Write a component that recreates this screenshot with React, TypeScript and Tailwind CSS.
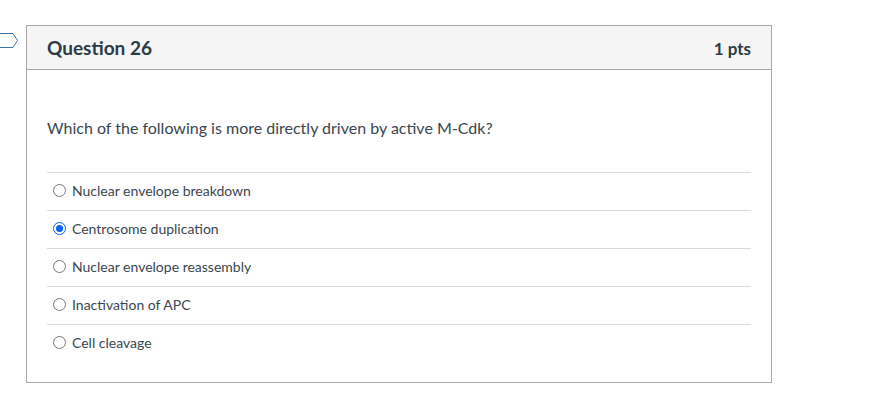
const answers = [
  'Nuclear envelope breakdown',
  'Centrosome duplication',
  'Nuclear envelope reassembly',
  'Inactivation of APC',
  'Cell cleavage',
];

function Radio({ checked }: { checked: boolean }) {
  return (
    <span
      className={`flex h-[13px] w-[13px] shrink-0 items-center justify-center rounded-full border ${
        checked ? 'border-[#0b62f5]' : 'border-[#767676]'
      } bg-white`}
    >
      {checked && <span className="h-[7px] w-[7px] rounded-full bg-[#0b62f5]" />}
    </span>
  );
}

export default function App() {
  return (
    <div className="relative h-[417px] w-[891px] bg-white pt-[25px] font-['Lato','Noto_Sans',sans-serif] text-[#3a4650]">
      {/* bookmark flag */}
      <svg className="absolute left-0 top-[33px]" width="19" height="15" viewBox="0 0 19 15">
        <path d="M-1 0.5 H13 L17.5 7.5 L13 14.5 H-1" fill="white" stroke="#3b73af" strokeWidth="1" />
      </svg>
      <div className="ml-[26px] w-[746px] border border-[#a8a8a8]">
        <div className="flex h-[44px] items-center justify-between border-b border-[#a8a8a8] bg-[#f5f5f5] pl-[20px] pr-[20px] text-[#2d3b45]">
          <span className="pt-[2px] text-[19px] font-bold">Question 26</span>
          <span className="pt-[2px] text-[17px] font-bold">1 pts</span>
        </div>
        <div className="px-[20px] pb-[20px]">
          <p className="pb-[34px] pt-[47px] text-[16px] leading-[21px]">
            Which of the following is more directly driven by active M-Cdk?
          </p>
          <div>
            {answers.map((a, i) => (
              <div key={a} className="flex h-[38px] items-center gap-[6px] border-t border-[#dadada] pb-[2px] pl-[6px] text-[14px]">
                <Radio checked={i === 1} />
                <span>{a}</span>
              </div>
            ))}
          </div>
        </div>
      </div>
    </div>
  );
}
